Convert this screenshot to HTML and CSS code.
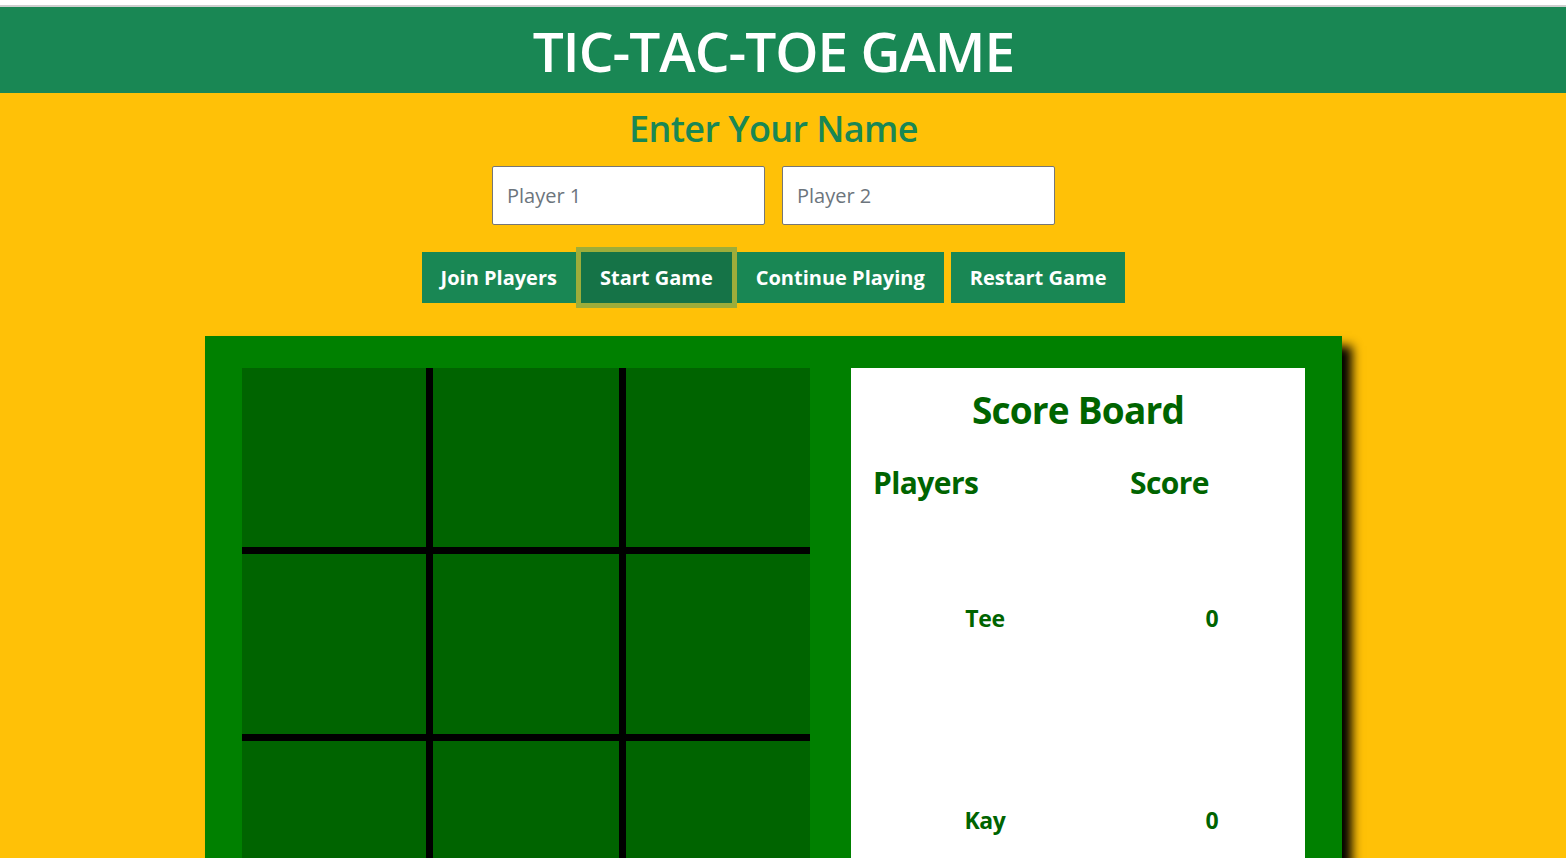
FILE: index.html
```html
<!DOCTYPE html>
<html lang="en">
<head>
<meta charset="utf-8">
<title>Tic-Tac-Toe Game</title>
<link rel="stylesheet" href="styles.css">
</head>
<body>
<div class="topstrip"></div>
<header class="header">
  <h1 class="title">TIC-TAC-TOE GAME</h1>
</header>
<main class="main">
  <h2 class="subtitle">Enter Your Name</h2>
  <div class="inputs">
    <input class="field" type="text" placeholder="Player 1">
    <input class="field" type="text" placeholder="Player 2">
  </div>
  <div class="buttons">
    <button class="btn">Join Players</button>
    <button class="btn btn-active">Start Game</button>
    <button class="btn">Continue Playing</button>
    <button class="btn btn-last">Restart Game</button>
  </div>
  <section class="arena">
    <div class="board">
      <div class="cell"></div><div class="cell"></div><div class="cell"></div>
      <div class="cell"></div><div class="cell"></div><div class="cell"></div>
      <div class="cell"></div><div class="cell"></div><div class="cell"></div>
    </div>
    <div class="scoreboard">
      <h3 class="sb-title">Score Board</h3>
      <div class="sb-head">
        <span class="sb-h1">Players</span>
        <span class="sb-h2">Score</span>
      </div>
      <div class="sb-row sb-row-first">
        <span class="sb-name">Tee</span>
        <span class="sb-score">0</span>
      </div>
      <div class="sb-row">
        <span class="sb-name">Kay</span>
        <span class="sb-score">0</span>
      </div>
    </div>
  </section>
</main>
</body>
</html>
```

FILE: styles.css
```css
* { box-sizing: border-box; }
html, body {
  margin: 0;
  padding: 0;
  background: #ffc107;
  overflow: hidden;
  font-family: "Open Sans", "Noto Sans", "Liberation Sans", sans-serif;
}
.topstrip {
  height: 7px;
  background: #ffffff;
  border-bottom: 2px solid #cfcfcf;
}
.header {
  height: 86px;
  background: #198754;
  display: flex;
  align-items: center;
  justify-content: center;
  padding-right: 19px;
}
.title {
  margin: 0;
  color: #ffffff;
  font-size: 55px;
  font-weight: 600;
  letter-spacing: -1px;
  line-height: 1;
}
.main {
  padding-right: 19px;
  display: flex;
  flex-direction: column;
  align-items: center;
}
.subtitle {
  margin: 14px 0 0;
  height: 44px;
  line-height: 44px;
  color: #198754;
  font-size: 36px;
  font-weight: 600;
  letter-spacing: -0.6px;
}
.inputs {
  margin-top: 15px;
  display: flex;
  gap: 17px;
}
.field {
  width: 273px;
  height: 59px;
  border: 1px solid #767676;
  border-radius: 2px;
  background: #fff;
  padding: 0 14px;
  font-family: inherit;
  font-size: 20px;
  color: #212529;
}
.field::placeholder { color: #6c757d; }
.buttons {
  margin-top: 27px;
  display: flex;
  gap: 5px;
}
.btn {
  height: 51px;
  padding: 0 19px;
  border: none;
  background: #198754;
  color: #ffffff;
  font-family: inherit;
  font-size: 20px;
  font-weight: 700;
  letter-spacing: 0;
}
.btn-last { margin-left: 2px; }
.btn-active {
  background: #157347;
  box-shadow: 0 0 0 5px #9dad3a;
}
.arena {
  margin-top: 33px;
  width: 1137px;
  background: #008000;
  padding: 32px 37px 32px 37px;
  display: flex;
  gap: 41px;
  box-shadow: 10px 10px 10px #000;
}
.board {
  width: 568px;
  display: grid;
  grid-template-columns: 184px 186px 184px;
  grid-template-rows: 179px 180px 180px;
  gap: 7px;
  background: #000;
}
.cell { background: #006400; }
.scoreboard {
  width: 454px;
  background: #ffffff;
  color: #006400;
  padding: 0 0 0 22px;
}
.sb-title {
  margin: 17px 0 0;
  height: 50px;
  line-height: 50px;
  text-align: center;
  padding-right: 22px;
  font-size: 37px;
  font-weight: 700;
  letter-spacing: -0.8px;
}
.sb-head {
  margin-top: 28px;
  height: 40px;
  line-height: 40px;
  display: grid;
  grid-template-columns: 257px auto;
  font-size: 30px;
  font-weight: 700;
  letter-spacing: -0.6px;
}
.sb-row {
  height: 202px;
  display: grid;
  grid-template-columns: 224px 1fr;
  align-items: center;
  font-size: 23px;
  font-weight: 700;
  letter-spacing: -0.4px;
}
.sb-row-first { margin-top: 14px; }
.sb-name { text-align: center; }
.sb-score { text-align: center; padding-left: 22px; }
```
